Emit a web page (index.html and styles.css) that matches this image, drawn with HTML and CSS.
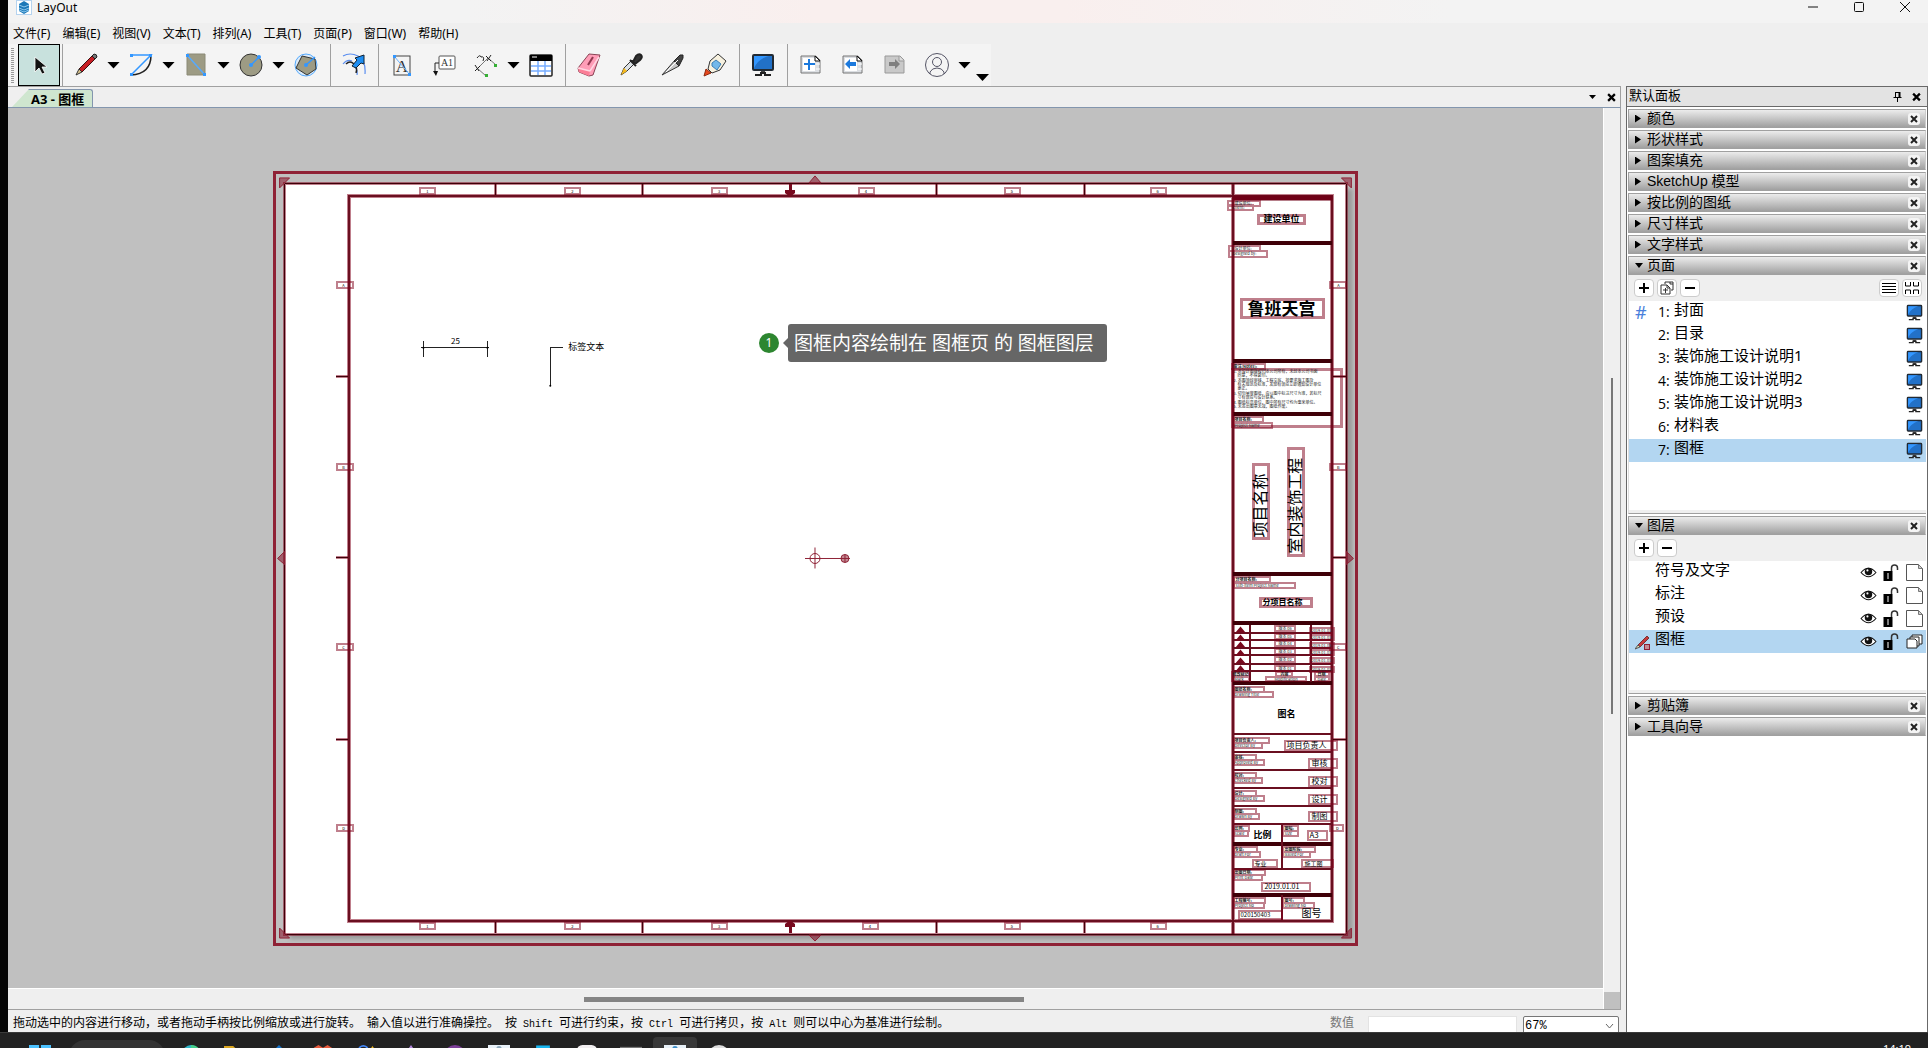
FILE: index.html
```html
<!DOCTYPE html>
<html lang="zh-CN">
<head>
    <meta charset="UTF-8">
    <meta name="viewport" content="width=device-width, initial-scale=1.0">
    <title>LayOut</title>
    <link rel="stylesheet" href="styles.css">
</head>
<body>

    <!-- shared icons -->
    <svg class="sprite" aria-hidden="true">
        <symbol id="monitor" viewBox="0 0 24 24">
            <rect x="2" y="2" width="20" height="15" rx="1" fill="#2271c8" stroke="#222a33" stroke-width="2"/>
            <path d="M3 3h15C10 5 6 9 3 15z" fill="#3397ff"/>
            <path d="M10 18h4v3h-4z" fill="#444"/>
            <path d="M4 22h7M13 22h7M9 20h6" stroke="#222" stroke-width="2"/>
        </symbol>
        <symbol id="eye" viewBox="0 0 16 12">
            <path d="M1 6Q8-2 15 6Q8 14 1 6z" fill="#fff" stroke="#111"/>
            <circle cx="8" cy="5" r="3.5" fill="#111"/>
            <circle cx="7" cy="4" r="1" fill="#fff"/>
        </symbol>
        <symbol id="unlock" viewBox="0 0 16 17">
            <path d="M8 7V4q0-3 3-3t3 3v2" fill="none" stroke="#333" stroke-width="1.5"/>
            <rect x="0" y="7" width="9" height="10" fill="#000"/>
            <path d="M4.5 9v6" stroke="#fff"/>
        </symbol>
        <symbol id="sheet" viewBox="0 0 17 17">
            <path d="M.5.5h12l4 4v12H.5z" fill="#fff" stroke="#555"/>
            <path d="M12.500 .5v4h4z" fill="#ccc" stroke="#777"/>
        </symbol>
        <symbol id="page" viewBox="0 0 22 20">
            <path d="M1 1h15l4 4v13H1z" fill="#dcdfe3" stroke="#777"/>
            <path d="M3 3h12v13H3z" fill="#fff"/>
            <path d="M15 1v5h5z" fill="#fff" stroke="#111"/>
            <path d="M16 9h4M16 14h4" stroke="#fff"/>
        </symbol>
        <symbol id="cross" viewBox="0 0 8 8">
            <path d="M1 1l6 6M7 1L1 7" stroke="currentColor" stroke-width="2"/>
        </symbol>
    </svg>

    <div class="window">
        <header class="titlebar">
            <svg class="app-icon" viewBox="0 0 16 16"><rect x=".5" y=".5" width="15" height="14" fill="#fff" stroke="#b5d3ef"/><path d="M8 1l5 3v7l-5 3-5-3V4z" fill="#1c78b8"/><path d="M3 5l5 2 5-2M3 8l5 2 5-2M3 10l5 2 5-2" fill="none" stroke="#8ec9ee"/></svg>
            <span class="app-name">LayOut</span>
            <div class="window-buttons">
                <button type="button" aria-label="最小化"><svg viewBox="0 0 12 12"><path d="M1 6h10" stroke="#111"/></svg></button>
                <button type="button" aria-label="最大化"><svg viewBox="0 0 12 12"><rect x="1.500" y="1.500" width="9" height="9" rx="1" fill="none" stroke="#111"/></svg></button>
                <button type="button" aria-label="关闭"><svg viewBox="0 0 12 12"><path d="M1 1l10 10M11 1L1 11" stroke="#111"/></svg></button>
            </div>
        </header>

        <nav class="menubar">
            <button type="button">文件(F)</button>
            <button type="button">编辑(E)</button>
            <button type="button">视图(V)</button>
            <button type="button">文本(T)</button>
            <button type="button">排列(A)</button>
            <button type="button">工具(T)</button>
            <button type="button">页面(P)</button>
            <button type="button">窗口(W)</button>
            <button type="button">帮助(H)</button>
        </nav>

        <div class="toolbar">
            <span class="grip"></span>
            <button type="button" class="tool active" aria-label="选择"><svg viewBox="0 0 24 24"><path d="M8 4v15l4-4 3 6 3-1-3-6h5z" fill="#111" stroke="#fff" stroke-width=".8"/></svg></button>
            <span class="sep"></span>
            <button type="button" class="tool" aria-label="线条"><svg viewBox="0 0 24 24"><path d="M5 16L19 2l3 3L8 19z" fill="#c81e24" stroke="#3a1010"/><path d="M18 3l2-2q3 0 3 3l-2 2z" fill="#777" stroke="#222"/><path d="M5 16l3 3-6 3z" fill="#d9c28a" stroke="#333"/></svg></button>
            <button type="button" class="caret" aria-label="线条选项"></button>
            <button type="button" class="tool" aria-label="圆弧"><svg viewBox="0 0 24 24"><path d="M22 2q0 19-20 20" fill="none" stroke="#222" stroke-width="1.500"/><path d="M2 2h20L2 22" fill="none" stroke="#3397ff" stroke-width="1.500"/><path d="M1 1h3v3H1zM20 1h3v3h-3zM1 20h3v3H1z" fill="#3397ff"/></svg></button>
            <button type="button" class="caret" aria-label="圆弧选项"></button>
            <button type="button" class="tool" aria-label="矩形"><svg viewBox="0 0 24 24"><path d="M3 1h18v21H3z" fill="#9d9b84" stroke="#8b8a76"/><path d="M3 2l18 20" stroke="#55aaff" stroke-width="1.500"/><path d="M2 1h3v3H2zM19 20h3v3h-3z" fill="#3397ff"/></svg></button>
            <button type="button" class="caret" aria-label="矩形选项"></button>
            <button type="button" class="tool" aria-label="圆"><svg viewBox="0 0 24 24"><circle cx="12" cy="12" r="11" fill="#9d9b84" stroke="#333"/><path d="M12 12l8-8" stroke="#3397ff" stroke-width="1.500"/><circle cx="12" cy="12" r="2" fill="#3397ff"/><circle cx="20" cy="4" r="2" fill="#3397ff"/></svg></button>
            <button type="button" class="caret" aria-label="圆选项"></button>
            <button type="button" class="tool" aria-label="多边形"><svg viewBox="0 0 24 24"><circle cx="12" cy="12" r="11" fill="#dcebf8" stroke="#55aaff"/><path d="M8 3l13 3 1 10-9 6L2 15z" fill="#9d9b84" stroke="#333"/><path d="M12 12l9-8" stroke="#3397ff" stroke-width="1.500"/><circle cx="12" cy="12" r="2" fill="#3397ff"/></svg></button>
            <span class="sep"></span>
            <button type="button" class="tool" aria-label="偏移"><svg viewBox="0 0 24 24"><path d="M1 3Q8-1 16 3t7 18M1 11q4-5 9-3M13 14q3 3 2 8" fill="none" stroke="#5a8ef0" stroke-width="1.200"/><path d="M4 11q4-4 8 0t2 9" fill="none" stroke="#222" stroke-width="1.500"/><path d="M10 13l5-6-2-2 9-3v9l-3-1-5 5z" fill="#1d8df2" stroke="#123"/></svg></button>
            <span class="sep"></span>
            <button type="button" class="tool" aria-label="文本"><svg viewBox="0 0 24 24"><rect x="4" y="3" width="16" height="19" fill="none" stroke="#444"/><text x="12" y="19" class="icon-serif" font-size="17">A</text><path d="M4 3l16 19" stroke="#6ab2ff"/><path d="M3 2h3v3H3zM18 20h3v3h-3z" fill="#3397ff"/></svg></button>
            <button type="button" class="tool" aria-label="标签"><svg viewBox="0 0 24 24"><rect x="7" y="3" width="16" height="13" rx="1" fill="#fff" stroke="#555"/><text x="15" y="13" class="icon-serif" font-size="10">A1</text><path d="M7 10H3v9" fill="none" stroke="#222"/><path d="M1 18h5l-2 5z" fill="#111"/></svg></button>
            <button type="button" class="tool" aria-label="尺寸"><svg viewBox="0 0 24 24"><path d="M3 16L14 5M14 5l8 7M3 15l9 8" fill="none" stroke="#777"/><path d="M1 12l4 6M1 18l5-5M12 3l5 5M17 2l-4 6M3 5q3-4 4-1 4-1 2 4" fill="none" stroke="#222"/><path d="M20 11h3v3h-3zM11 21h3v3h-3z" fill="#35b035"/></svg></button>
            <button type="button" class="caret" aria-label="尺寸选项"></button>
            <button type="button" class="tool" aria-label="表格"><svg viewBox="0 0 24 24"><rect x="1" y="2" width="22" height="21" rx="1" fill="#fff" stroke="#222" stroke-width="1.500"/><path d="M1 2h22v6H1z"/><path d="M9 8v14M16 8v14M2 13h20M2 18h20" stroke="#77adff" stroke-width="1.500"/><path d="M3 4h5" stroke="#fff"/></svg></button>
            <span class="sep"></span>
            <button type="button" class="tool" aria-label="橡皮擦"><svg viewBox="0 0 24 24"><path d="M1 15L12 1l11 1-7 20-4 1-10-4z" fill="#ff9db7" stroke="#8a4455"/><path d="M1 15l12 3-1 5-10-4z" fill="#fb7e96"/><path d="M13 18L22 4M1 15l12 3" stroke="#ffd7e2" stroke-width="1.500"/><path d="M11 12l5-8" stroke="#933850" stroke-width="2"/></svg></button>
            <button type="button" class="tool" aria-label="样式"><svg viewBox="0 0 24 24"><path d="M2 22l3-7 8-8 3 3-8 8z" fill="#dce1e5" stroke="#333"/><path d="M2 22l3-7 3 3z" fill="#f5b91b"/><path d="M11 7l6 6M14 9l3-6q3-3 5-1t-1 5l-5 4z" fill="#333" stroke="#222" stroke-width="2"/></svg></button>
            <button type="button" class="tool" aria-label="分割"><svg viewBox="0 0 24 24"><path d="M1 22l13-15 4 6z" fill="#c8c8c8" stroke="#333"/><path d="M13 8l6-6h3v3l-4 8z" fill="#444" stroke="#222"/><path d="M5 19l12-12" stroke="#fff"/></svg></button>
            <button type="button" class="tool" aria-label="合并"><svg viewBox="0 0 24 24"><path d="M5 16l2-8 8-7 8 7-6 9-8 3z" fill="#f7f1df" stroke="#333"/><path d="M9 10l4-3 5 4-4 6-5-4z" fill="#73b8ea" stroke="#3d7eb5"/><path d="M3 16l5 4-7 3z" fill="#e8481d" stroke="#8d2a10"/></svg></button>
            <span class="sep"></span>
            <button type="button" class="tool" aria-label="开始演示"><svg><use href="#monitor"/></svg></button>
            <span class="sep"></span>
            <button type="button" class="tool" aria-label="添加页面"><svg viewBox="0 0 24 24"><use href="#page" x="1" y="2" width="22" height="20"/><path d="M10 6v11M5 11h11" stroke="#1b79dd" stroke-width="2"/></svg></button>
            <button type="button" class="tool" aria-label="上一页"><svg viewBox="0 0 24 24"><use href="#page" x="1" y="2" width="22" height="20"/><path d="M4 11l5-5v3h6v4H9v3z" fill="#1b79dd"/></svg></button>
            <button type="button" class="tool" aria-label="下一页" disabled><svg viewBox="0 0 24 24"><path d="M2 3h15l4 4v13H2z" fill="#c9c9c9" stroke="#999"/><path d="M16 3v5h5" fill="#ddd" stroke="#999"/><path d="M17 11l-5-5v3H6v4h6v3z" fill="#808080"/></svg></button>
            <button type="button" class="tool" aria-label="用户"><svg viewBox="0 0 24 24"><g fill="none" stroke="#555566"><circle cx="12" cy="12" r="11.500"/><circle cx="12" cy="9" r="4.500"/><path d="M5 21v-2q2-4 7-4t7 4v2"/></g></svg></button>
            <button type="button" class="caret" aria-label="用户选项"></button>
            <button type="button" class="caret overflow" aria-label="更多工具"></button>
        </div>

        <main class="main">
            <section class="document">
                <div class="tabs">
                    <button type="button" class="tab">A3 - 图框</button>
                    <button type="button" class="tab-menu" aria-label="文档列表"></button>
                    <button type="button" class="tab-close" aria-label="关闭文档"><svg><use href="#cross"/></svg></button>
                </div>

                <div class="viewport">
                    <div class="canvas">
                        <svg class="drawing" viewBox="8 108 1595 881">
                            <!-- paper and its shadow -->
                            <rect x="289" y="189" width="1064" height="751" fill="#999" class="shadow"/>
                            <rect x="284" y="184" width="1063" height="751" fill="#fff"/>
                            <rect x="274" y="173" width="1083" height="772" class="group"/>

                            <!-- sheet border and ticks -->
                            <g class="halo">
                                <path d="M284 184h1063v751H284z"/>
                                <path d="M495 184v12M642 184v12M790 184v12M937 184v12M1085 184v12M495 922v12M642 922v12M790 922v12M937 922v12M1085 922v12"/>
                                <path d="M335 377h13M335 558h13M335 740h13M1334 377h13M1334 558h13M1334 740h13"/>
                            </g>
                            <path class="halo wide" d="M348 196h985v726H348zM1233 184v751"/>
                            <path class="core" d="M284 184h1063v751H284zM495 184v12M642 184v12M790 184v12M937 184v12M1085 184v12M495 922v12M642 922v12M790 922v12M937 922v12M1085 922v12M335 377h13M335 558h13M335 740h13M1334 377h13M1334 558h13M1334 740h13"/>
                            <path class="frame" d="M348 196h985v726H348zM1233 184v751"/>
                            <path class="grip-mark" d="M279 178h10l-10 10zM1342 178h10v10zM1352 929v10h-10zM279 929v10h10zM809 183l6-7 6 7zM809 936l6 6 6-6zM284 552v13l-7-6zM1347 552v13l7-6z"/>
                            <path fill="#78091e" d="M789 184h3v6h3v3l-5 4-5-4v-3h4zM789 934h3v-6h3v-3l-5-4-5 4v3h4z"/>

                            <!-- zone labels -->
                            <path class="halo thin" d="M420 188h15v6h-15zM565 188h15v6h-15zM712 188h15v6h-15zM859 188h15v6h-15zM1005 188h15v6h-15zM1151 188h15v6h-15zM420 924h15v6h-15zM565 924h15v6h-15zM712 924h15v6h-15zM863 924h15v6h-15zM1005 924h15v6h-15zM1151 924h15v6h-15z"/>
                            <path class="halo thin" d="M336 282h16v6h-16zM336 464h16v6h-16zM336 645h16v6h-16zM336 826h16v6h-16zM1331 282h16v6h-16zM1331 464h16v6h-16zM1331 645h16v6h-16zM1331 826h13v6h-13z"/>
                            <g class="zone">
                                <text x="427" y="193">1</text><text x="572" y="193">2</text><text x="719" y="193">3</text><text x="866" y="193">4</text><text x="1012" y="193">5</text><text x="1158" y="193">6</text>
                                <text x="427" y="929">1</text><text x="572" y="929">2</text><text x="719" y="929">3</text><text x="870" y="929">4</text><text x="1012" y="929">5</text><text x="1158" y="929">6</text>
                                <text x="343" y="287">A</text><text x="343" y="469">B</text><text x="343" y="650">C</text><text x="343" y="831">D</text>
                                <text x="1339" y="287">A</text><text x="1339" y="469">B</text><text x="1339" y="650">C</text><text x="1338" y="831">D</text>
                            </g>

                            <!-- dimension and label samples -->
                            <path class="ink" d="M421 348h68M423 341v16M487 341v16M563 348h-13v38"/>
                            <circle cx="423" cy="348" r="1"/><circle cx="487" cy="348" r="1"/><circle cx="550" cy="386" r="1"/>
                            <text x="455" y="344" class="t8 mid">25</text>
                            <text x="568" y="350" class="t9">标签文本</text>

                            <!-- centre grip -->
                            <g fill="none" stroke="#8f2236">
                                <path d="M805 559h38M815 548v21"/>
                                <circle cx="815" cy="559" r="5"/>
                                <circle cx="845" cy="559" r="4" fill="#c48a94"/>
                                <path d="M841 559h9M845 555v8"/>
                            </g>

                            <!-- title block rules -->
                            <path d="M1233 198h100" stroke="#6f0017" stroke-width="5"/>
                            <path class="heavy" d="M1233 243h100M1233 361h100M1233 414h100M1233 575h100M1233 624h100M1233 684h100M1233 845h100M1233 896h100"/>
                            <path class="rule" d="M1233 735h100M1233 753h100M1233 771h100M1233 789h100M1233 807h100M1233 825h100M1233 870h100M1283 825v45M1283 896v26"/>
                            <path class="rule" d="M1233 634h100M1233 641h100M1233 649h100M1233 656h100M1233 665h100M1233 672h100M1251 626v57M1312 626v57"/>

                            <!-- text selection boxes -->
                            <path class="halo" d="M1259 216h46v8h-46zM1242 300h82v18h-82zM1233 370h109v57h-109zM1254 465h15v74h-15zM1289 449h15v107h-15zM1261 599h51v8h-51z"/>
                            <path class="halo thin" d="M1228 201h33v5h-33zM1228 205h26v5h-26zM1229 246h32v5h-32zM1229 251h39v6h-39zM1232 364h34v5h-34zM1234 417h30v5h-30zM1234 423h39v5h-39z"/>
                            <path class="halo thin" d="M1234 578h37v5h-37zM1234 584h62v5h-62z"/>
                            <path class="halo thin" d="M1276 627h20v5h-20zM1276 635h20v5h-20zM1276 642h20v5h-20zM1276 650h20v5h-20zM1276 658h20v5h-20zM1276 667h20v5h-20zM1311 629h24v5h-24zM1311 636h24v5h-24zM1311 644h24v5h-24zM1311 651h24v5h-24zM1311 659h24v5h-24zM1311 668h24v5h-24z"/>
                            <path class="halo thin" d="M1232 673h18v4h-18zM1232 678h18v4h-18zM1277 673h16v4h-16zM1267 678h40v4h-40zM1316 673h14v4h-14zM1316 678h14v4h-14zM1234 688h31v5h-31zM1234 693h40v5h-40z"/>
                            <path class="halo thin" d="M1234 739h36v5h-36zM1234 744h29v5h-29zM1286 742h52v9h-52zM1234 756h23v5h-23zM1234 761h31v5h-31zM1310 760h28v9h-28zM1234 774h23v5h-23zM1234 779h29v5h-29zM1310 778h28v9h-28zM1234 792h23v5h-23zM1234 797h31v5h-31zM1310 796h28v9h-28zM1234 810h23v5h-23zM1234 815h26v5h-26zM1310 813h28v9h-28z"/>
                            <path class="halo thin" d="M1234 827h16v5h-16zM1234 832h15v5h-15zM1284 827h15v5h-15zM1284 832h15v5h-15zM1309 832h19v9h-19zM1234 848h24v5h-24zM1234 853h27v5h-27zM1284 848h32v5h-32zM1284 853h27v5h-27zM1254 861h24v7h-24zM1303 861h31v7h-31zM1234 871h32v5h-32zM1234 876h29v5h-29zM1263 884h48v8h-48z"/>
                            <path class="halo thin" d="M1234 899h32v5h-32zM1234 904h31v5h-31zM1284 899h21v5h-21zM1284 904h31v5h-31zM1239 912h44v8h-44z"/>

                            <!-- revision triangles -->
                            <path fill="#78091e" d="M1241 627l5 6h-10zM1241 635l5 6h-10zM1241 642l5 6h-10zM1241 650l5 6h-10zM1241 658l5 6h-10zM1241 666l5 6h-10z"/>

                            <!-- title block captions -->
                            <g class="cap">
                                <text x="1235" y="205">建设单位:</text><text x="1233" y="209">Client:</text>
                                <text x="1235" y="250">设计单位:</text><text x="1233" y="255">Designed by:</text>
                                <text x="1234" y="368" class="b">备注(Notes):</text>
                                <text x="1235" y="421" class="b">项目名称:</text><text x="1235" y="427">Project Name</text>
                                <text x="1236" y="582" class="b">分项目名称:</text><text x="1236" y="588">Sub-item Project Name</text>
                                <text x="1279" y="631">版本 06</text><text x="1279" y="639">版本 05</text><text x="1279" y="646">版本 04</text><text x="1279" y="654">版本 03</text><text x="1279" y="662">版本 02</text><text x="1279" y="671">版本 01</text>
                                <text x="1312" y="633">2019.01.01</text><text x="1312" y="640">2019.01.01</text><text x="1312" y="648">2019.01.01</text><text x="1312" y="655">2019.01.01</text><text x="1312" y="663">2019.01.01</text><text x="1312" y="672">2019.01.01</text>
                                <text x="1233" y="677" class="b">修改标记</text><text x="1235" y="682">Mark</text><text x="1281" y="677" class="b">内容</text><text x="1275" y="682">Modification</text><text x="1318" y="677" class="b">日期</text><text x="1318" y="682">Date</text>
                                <text x="1235" y="692" class="b">图纸名称:</text><text x="1235" y="697">Drawing Title</text>
                                <text x="1235" y="743" class="b">项目负责人:</text><text x="1235" y="748">Director By</text>
                                <text x="1235" y="760" class="b">审核:</text><text x="1235" y="765">Approved By</text>
                                <text x="1235" y="778" class="b">校对:</text><text x="1235" y="783">Checked By</text>
                                <text x="1235" y="796" class="b">设计:</text><text x="1235" y="801">Designed By</text>
                                <text x="1235" y="814" class="b">制图:</text><text x="1235" y="819">Drawn By</text>
                                <text x="1235" y="831" class="b">比例:</text><text x="1235" y="836">Scale</text><text x="1285" y="831" class="b">图幅:</text><text x="1285" y="836">Size</text>
                                <text x="1235" y="852" class="b">专业:</text><text x="1235" y="857">Draft For</text><text x="1285" y="852" class="b">出图阶段:</text><text x="1285" y="857">Issued For</text>
                                <text x="1235" y="875" class="b">出图日期:</text><text x="1235" y="880">Print Date</text>
                                <text x="1235" y="903" class="b">工程编号:</text><text x="1235" y="908">Project No</text><text x="1285" y="903" class="b">图号:</text><text x="1285" y="908">Drawing No</text>
                            </g>
                            <g class="notes">
                                <text x="1234" y="373">1. 本设计图版权归本公司所有，未经本公司书面</text>
                                <text x="1238" y="377">同意，不得复印。</text>
                                <text x="1234" y="382">2. 本图须经审核、工程交底，按要求施工图及</text>
                                <text x="1238" y="386">有关规范及标准，发现有误应立即通知设计单位</text>
                                <text x="1238" y="390">更正。</text>
                                <text x="1234" y="395">3. 切勿量度图纸，应以图中标注尺寸为准，若标尺</text>
                                <text x="1238" y="399">寸有误应与设计联系。</text>
                                <text x="1234" y="404">4. 图纸标高单位，图中所有尺寸均为毫米单位。</text>
                                <text x="1234" y="408">5. 未签出图章无效，图纸作废。</text>
                            </g>

                            <!-- title block values -->
                            <text x="1264" y="222" class="t9 b">建设单位</text>
                            <text x="1248" y="315" class="t17 b">鲁班天宫</text>
                            <text transform="translate(1267 538) rotate(-90)" class="t16">项目名称</text>
                            <text transform="translate(1302 554) rotate(-90)" class="t16">室内装饰工程</text>
                            <text x="1263" y="606" class="t8 b">分项目名称</text>
                            <text x="1278" y="718" class="t9 b">图名</text>
                            <text x="1287" y="749" class="t8">项目负责人</text>
                            <text x="1312" y="767" class="t8">审核</text>
                            <text x="1312" y="785" class="t8">校对</text>
                            <text x="1312" y="803" class="t8">设计</text>
                            <text x="1312" y="820" class="t8">制图</text>
                            <text x="1254" y="839" class="t9 b">比例</text>
                            <text x="1310" y="839" class="t8">A3</text>
                            <text x="1255" y="867" class="t6">专业</text>
                            <text x="1305" y="867" class="t6">施工图</text>
                            <text x="1265" y="890" class="t7">2019.01.01</text>
                            <text x="1241" y="918" class="t6">020150403</text>
                            <text x="1302" y="918" class="t10">图号</text>
                        </svg>
                        <div class="callout">
                            <span class="callout-badge">1</span>
                            <p class="callout-text">图框内容绘制在 图框页 的 图框图层</p>
                        </div>
                    </div>
                    <div class="scroll-x"><span class="thumb"></span></div>
                    <div class="scroll-y"><div class="track"><span class="thumb"></span></div><span class="corner"></span></div>
                </div>

                <footer class="statusbar">
                    <p class="hint">拖动选中的内容进行移动，或者拖动手柄按比例缩放或进行旋转。<kbd> </kbd>输入值以进行准确操控。<kbd> </kbd>按<kbd> Shift </kbd>可进行约束，按<kbd> Ctrl </kbd>可进行拷贝，按<kbd> Alt </kbd>则可以中心为基准进行绘制。</p>
                    <label for="measure">数值</label>
                    <input type="text" id="measure" name="measure">
                    <select id="zoom" name="zoom" aria-label="缩放">
                        <option>67%</option>
                        <option>100%</option>
                    </select>
                </footer>
            </section>

            <aside class="tray">
                <div class="tray-title">
                    <h2>默认面板</h2>
                    <button type="button" aria-label="固定"><svg viewBox="0 0 8 10"><path d="M2 0v5M2 .5h4M0 5.500h8M4 6v4" stroke="#000" fill="none"/><path d="M5 0h2v5H5z"/></svg></button>
                    <button type="button" aria-label="关闭面板"><svg viewBox="0 0 8 8"><use href="#cross"/></svg></button>
                </div>

                <div class="panel-head"><h3>颜色</h3><button type="button" aria-label="关闭"><svg><use href="#cross"/></svg></button></div>
                <div class="panel-head"><h3>形状样式</h3><button type="button" aria-label="关闭"><svg><use href="#cross"/></svg></button></div>
                <div class="panel-head"><h3>图案填充</h3><button type="button" aria-label="关闭"><svg><use href="#cross"/></svg></button></div>
                <div class="panel-head"><h3>SketchUp 模型</h3><button type="button" aria-label="关闭"><svg><use href="#cross"/></svg></button></div>
                <div class="panel-head"><h3>按比例的图纸</h3><button type="button" aria-label="关闭"><svg><use href="#cross"/></svg></button></div>
                <div class="panel-head"><h3>尺寸样式</h3><button type="button" aria-label="关闭"><svg><use href="#cross"/></svg></button></div>
                <div class="panel-head"><h3>文字样式</h3><button type="button" aria-label="关闭"><svg><use href="#cross"/></svg></button></div>

                <div class="panel-head open"><h3>页面</h3><button type="button" aria-label="关闭"><svg><use href="#cross"/></svg></button></div>
                <div class="panel-body">
                    <div class="panel-tools">
                        <button type="button" aria-label="添加页面"><svg viewBox="0 0 14 14"><path d="M7 2v10M2 7h10" stroke="#000" stroke-width="2"/></svg></button>
                        <button type="button" aria-label="复制页面"><svg viewBox="0 0 14 14"><path d="M5 3V1h8v8h-2M1 4h6l3 3v6H1zM3 9h5M5.500 7v5M7 4v3h3M10 1v2h3" fill="none" stroke="#333"/></svg></button>
                        <button type="button" aria-label="删除页面"><svg viewBox="0 0 14 14"><path d="M2 7h10" stroke="#000" stroke-width="2"/></svg></button>
                        <span class="spacer"></span>
                        <button type="button" aria-label="列表视图"><svg viewBox="0 0 14 14"><path d="M0 2.500h14M0 5.500h14M0 8.500h14M0 11.500h14" stroke="#000"/></svg></button>
                        <button type="button" aria-label="缩略图视图"><svg viewBox="0 0 14 14"><path d="M.5 1v4h5V1M8.500 1v4h5V1M.5 13V9h5v4M8.500 13V9h5v4" fill="none" stroke="#000"/></svg></button>
                    </div>
                    <ul class="list pages">
                        <li><span class="mark">#</span><span class="num">1:</span><span class="name">封面</span><svg class="ico"><use href="#monitor"/></svg></li>
                        <li><span class="mark"></span><span class="num">2:</span><span class="name">目录</span><svg class="ico"><use href="#monitor"/></svg></li>
                        <li><span class="mark"></span><span class="num">3:</span><span class="name">装饰施工设计说明1</span><svg class="ico"><use href="#monitor"/></svg></li>
                        <li><span class="mark"></span><span class="num">4:</span><span class="name">装饰施工设计说明2</span><svg class="ico"><use href="#monitor"/></svg></li>
                        <li><span class="mark"></span><span class="num">5:</span><span class="name">装饰施工设计说明3</span><svg class="ico"><use href="#monitor"/></svg></li>
                        <li><span class="mark"></span><span class="num">6:</span><span class="name">材料表</span><svg class="ico"><use href="#monitor"/></svg></li>
                        <li class="selected"><span class="mark"></span><span class="num">7:</span><span class="name">图框</span><svg class="ico"><use href="#monitor"/></svg></li>
                    </ul>
                </div>

                <div class="panel-head open"><h3>图层</h3><button type="button" aria-label="关闭"><svg><use href="#cross"/></svg></button></div>
                <div class="panel-body">
                    <div class="panel-tools">
                        <button type="button" aria-label="添加图层"><svg viewBox="0 0 14 14"><path d="M7 2v10M2 7h10" stroke="#000" stroke-width="2"/></svg></button>
                        <button type="button" aria-label="删除图层"><svg viewBox="0 0 14 14"><path d="M2 7h10" stroke="#000" stroke-width="2"/></svg></button>
                    </div>
                    <ul class="list layers">
                        <li><span class="mark"></span><span class="name">符号及文字</span><svg class="ico"><use href="#eye"/></svg><svg class="ico"><use href="#unlock"/></svg><svg class="ico"><use href="#sheet"/></svg></li>
                        <li><span class="mark"></span><span class="name">标注</span><svg class="ico"><use href="#eye"/></svg><svg class="ico"><use href="#unlock"/></svg><svg class="ico"><use href="#sheet"/></svg></li>
                        <li><span class="mark"></span><span class="name">预设</span><svg class="ico"><use href="#eye"/></svg><svg class="ico"><use href="#unlock"/></svg><svg class="ico"><use href="#sheet"/></svg></li>
                        <li class="selected"><span class="mark"><svg viewBox="0 0 16 16"><path d="M3 11L12 2l2 2-9 9z" fill="#c8383c" stroke="#733"/><path d="M3 11l2 2-5 2z" fill="#eadcb0" stroke="#555"/><rect x="9.500" y="10.500" width="5" height="5" fill="#c48a94" stroke="#8f1f35"/></svg></span><span class="name">图框</span><svg class="ico"><use href="#eye"/></svg><svg class="ico"><use href="#unlock"/></svg><svg class="ico" viewBox="0 0 17 17"><path d="M6 2h10v9H6z" fill="#fff" stroke="#222"/><path d="M4 4h9v9H4z" fill="#fff" stroke="#222"/><path d="M1 6h8l2 2v7H1z" fill="#fff" stroke="#222"/></svg></li>
                    </ul>
                </div>

                <div class="panel-head"><h3>剪贴簿</h3><button type="button" aria-label="关闭"><svg><use href="#cross"/></svg></button></div>
                <div class="panel-head"><h3>工具向导</h3><button type="button" aria-label="关闭"><svg><use href="#cross"/></svg></button></div>
            </aside>
        </main>
    </div>

    <div class="taskbar">
        <button type="button" class="task" aria-label="开始"><svg viewBox="0 0 24 24"><path d="M0 0h11v11H0zM13 0h11v11H13zM0 13h11v11H0zM13 13h11v11H13z" fill="#4cc2ff"/></svg></button>
        <span class="search"></span>
        <button type="button" class="task" aria-label="浏览器"><svg viewBox="0 0 24 24"><path d="M2 6Q12-6 22 6v18H2z" fill="#2fb6c8"/><path d="M12 0q7 0 10 6v8H12z" fill="#45cf8a"/></svg></button>
        <button type="button" class="task" aria-label="文件夹"><svg viewBox="0 0 24 24"><path d="M0 1h10l3 3h11v18H0z" fill="#d9a520"/></svg></button>
        <button type="button" class="task" aria-label="编辑器"><svg viewBox="0 0 24 24"><path d="M12 0l12 12-12 12L0 12z" fill="#1673c8"/></svg></button>
        <button type="button" class="task" aria-label="火狐"><svg viewBox="0 0 24 24"><path d="M2 3l5-3 5 3 5-3 6 4-3 20H4z" fill="#e65a3c"/></svg></button>
        <button type="button" class="task" aria-label="绘图"><svg viewBox="0 0 24 24"><circle cx="8" cy="6" r="5" fill="none" stroke="#4285f4" stroke-width="2"/><path d="M18 1l4 6h-8z" fill="#f0b71c"/></svg></button>
        <button type="button" class="task" aria-label="影音"><svg viewBox="0 0 24 24"><path d="M12 0l7 10H5z" fill="#b58ae0"/></svg></button>
        <button type="button" class="task" aria-label="录屏"><svg viewBox="0 0 24 24"><circle cx="12" cy="12" r="12" fill="#7d3f98"/></svg></button>
        <button type="button" class="task" aria-label="文档"><svg viewBox="0 0 24 24"><path d="M0 0h24v24H0z" fill="#e8f1f8"/><circle cx="12" cy="4" r="3" fill="#8aa5b8"/></svg></button>
        <button type="button" class="task" aria-label="手机"><svg viewBox="0 0 24 24"><rect x="6" y="2" width="12" height="20" fill="none" stroke="#18b6f0" stroke-width="3"/></svg></button>
        <button type="button" class="task" aria-label="聊天"><svg viewBox="0 0 24 24"><rect x="1" y="0" width="22" height="24" rx="6" fill="#f1eef0"/></svg></button>
        <button type="button" class="task" aria-label="终端"><svg viewBox="0 0 24 24"><path d="M0 2h24v22H0z" fill="#777"/></svg></button>
        <button type="button" class="task current" aria-label="LayOut"><svg viewBox="0 0 24 24"><path d="M0 0h24v24H0z" fill="#e8f1f8"/><circle cx="12" cy="4" r="3" fill="#3f8ec8"/></svg></button>
        <button type="button" class="task" aria-label="工具"><svg viewBox="0 0 24 24"><circle cx="12" cy="12" r="12" fill="#ddd"/></svg></button>
        <time class="clock">14:19</time>
    </div>

</body>
</html>
```

FILE: styles.css
```css
* {
    box-sizing: border-box;
}

body {
    margin: 0;
    height: 100vh;
    display: flex;
    flex-direction: column;
    overflow: hidden;
    background: #050505;
    font-family: "Noto Sans", "Noto Sans CJK SC", sans-serif;
    font-size: 12px;
    color: #000;
}

button {
    margin: 0;
    padding: 0;
    border: none;
    background: none;
    font: inherit;
    color: inherit;
}

h2, h3, p, ul {
    margin: 0;
    padding: 0;
    font-weight: normal;
    list-style: none;
}

.sprite {
    display: none;
}

.window {
    flex: 1;
    min-height: 0;
    margin-left: 8px;
    display: flex;
    flex-direction: column;
    background: #efefef;
}

/* title bar */
.titlebar {
    height: 23px;
    display: flex;
    padding-left: 8px;
    background: linear-gradient(90deg, #f3f3f3 24%, #f9efee 42%, #f9efee 55%, #f3f3f3 75%);
}

.app-icon {
    width: 16px;
    height: 16px;
}

.app-name {
    flex: 1;
    margin-left: 5px;
    line-height: 16px;
}

.window-buttons {
    display: flex;
}

.window-buttons button {
    width: 46px;
    height: 15px;
}

.window-buttons svg {
    width: 12px;
    height: 12px;
}

/* menu */
.menubar {
    height: 21px;
    display: flex;
    gap: 12px;
    padding-left: 5px;
    line-height: 19px;
}

/* toolbar */
.toolbar {
    height: 42px;
    display: flex;
    align-self: flex-start;
    align-items: center;
    padding: 0 2px 0 3px;
    background: #f4f4f4;
}

.grip {
    width: 3px;
    height: 35px;
    margin-right: 4px;
    background: repeating-linear-gradient(#999 0 1px, #f4f4f4 1px 2px);
}

.tool {
    width: 42px;
    height: 42px;
    display: flex;
    align-items: center;
    justify-content: center;
}

.tool svg {
    width: 24px;
    height: 24px;
}

.tool.active {
    border: 1px solid #000;
    background: #c8e1dd;
}

.icon-serif {
    font-family: "Liberation Serif", serif;
    fill: #333;
    text-anchor: middle;
}

.sep {
    width: 1px;
    height: 42px;
    margin: 0 2px;
    background: #a0a0a0;
}

.sep ~ .sep {
    margin-left: 3px;
}

.caret {
    width: 13px;
    height: 7px;
    background: #000;
    clip-path: polygon(0 0, 100% 0, 50% 100%);
}

.caret.overflow {
    align-self: flex-end;
    margin: 0 0 5px 5px;
}

/* document area */
.main {
    flex: 1;
    min-height: 0;
    display: grid;
    grid-template-columns: minmax(0, 1fr) 302px;
    gap: 5px;
}

.document {
    min-height: 0;
    display: flex;
    flex-direction: column;
}

.tabs {
    height: 22px;
    display: flex;
    align-items: center;
    padding: 0 4px;
    border-top: 1px solid #a0a0a0;
    border-right: 1px solid #a0a0a0;
    border-bottom: 1px solid #8396ae;
}

.tab {
    align-self: flex-end;
    height: 18px;
    padding: 0 8px 0 19px;
    border-top: 1px solid #8396ae;
    border-right: 1px solid #8396ae;
    border-radius: 0 3px 0 0;
    background: #cfe6cf;
    clip-path: polygon(17px 0, 100% 0, 100% 100%, 0 100%);
    font-size: 13px;
    font-weight: bold;
    line-height: 16px;
}

.tab-menu {
    width: 7px;
    height: 4px;
    margin: 0 11px 0 auto;
    background: #000;
    clip-path: polygon(0 0, 100% 0, 50% 100%);
}

.tab-close, .tab-close svg {
    display: block;
    width: 9px;
    height: 9px;
}

.viewport {
    flex: 1;
    min-height: 0;
    display: grid;
    grid-template: minmax(0, 1fr) 21px / minmax(0, 1fr) 18px;
    border-bottom: 1px solid #a0a0a0;
}

.canvas {
    position: relative;
    background: #c0c0c0;
    overflow: hidden;
}

.drawing {
    display: block;
    width: 100%;
    height: 100%;
    font-family: "Noto Sans CJK SC", sans-serif;
}

.scroll-x {
    grid-row: 2;
    display: grid;
    grid-template-columns: 576fr 440fr 579fr;
    align-items: center;
    border-top: 1px solid #fff;
}

.scroll-x .thumb {
    grid-column: 2;
    height: 5px;
    background: #858585;
}

.scroll-y {
    grid-area: 1 / 2 / 3 / 3;
    display: flex;
    flex-direction: column;
    border-left: 1px solid #fff;
    border-right: 1px solid #a0a0a0;
}

.track {
    flex: 1;
    display: grid;
    grid-template-rows: 270fr 336fr 278fr;
    justify-items: center;
}

.track .thumb {
    grid-row: 2;
    width: 2px;
    background: #777;
}

.corner {
    height: 17px;
    background: #c0c0c0;
}

/* drawing strokes */
.halo {
    fill: none;
    stroke: #80001a;
    stroke-opacity: 0.5;
    stroke-width: 3;
    shape-rendering: crispEdges;
}

.halo.wide {
    stroke-width: 4;
}

.halo.thin {
    stroke-width: 2;
}

.core {
    fill: none;
    stroke: #3f0008;
    shape-rendering: crispEdges;
}

.frame, .rule {
    fill: none;
    stroke: #6a0f20;
    stroke-width: 2;
    shape-rendering: crispEdges;
}

.heavy {
    stroke: #3f0008;
    stroke-width: 4;
    shape-rendering: crispEdges;
}

.group {
    fill: none;
    stroke: #8f2236;
    stroke-width: 3;
    shape-rendering: crispEdges;
}

.grip-mark {
    fill: #80001a;
    fill-opacity: 0.5;
    stroke: #8f2236;
}

.ink {
    fill: none;
    stroke: #222;
    shape-rendering: crispEdges;
}

.shadow {
    filter: blur(2px);
}

.zone {
    font-size: 4px;
    text-anchor: middle;
}

.cap, .notes {
    font-size: 4px;
    fill: #222;
}

.b { font-weight: bold; }
.mid { text-anchor: middle; }
.t6 { font-size: 6px; }
.t7 { font-size: 7px; }
.t8 { font-size: 8px; }
.t9 { font-size: 9px; }
.t10 { font-size: 10px; }
.t16 { font-size: 16px; }
.t17 { font-size: 17px; }

/* numbered note over the sheet */
.callout {
    position: absolute;
    top: 216px;
    left: 751px;
    display: flex;
    align-items: center;
}

.callout-badge {
    width: 20px;
    height: 20px;
    margin-right: 4px;
    border-radius: 50%;
    background: #2d8630;
    color: #fff;
    line-height: 20px;
    text-align: center;
}

.callout::before {
    content: "";
    order: 1;
    border: 5px solid transparent;
    border-left-width: 0;
    border-right-color: #666;
}

.callout-text {
    order: 2;
    padding: 0 13px 0 6px;
    border-radius: 3px;
    background: #666;
    color: #fff;
    font-size: 19px;
    line-height: 38px;
    white-space: nowrap;
}

/* status bar */
.statusbar {
    height: 22px;
    display: flex;
    gap: 6px;
    padding: 6px 2px 0 5px;
    overflow: hidden;
    font-family: "Liberation Mono", "Noto Sans CJK SC", monospace;
}

.hint {
    flex: 1;
    line-height: 17px;
    white-space: nowrap;
}

.hint kbd {
    font-family: "Liberation Mono", monospace;
    font-size: 10px;
    white-space: pre;
}

.statusbar label {
    margin-right: 8px;
    color: #777;
    line-height: 17px;
}

.statusbar input, .statusbar select {
    width: 149px;
    height: 20px;
    border: 1px solid #e3e3e3;
    background: #fff;
    font: inherit;
}

.statusbar select {
    width: 96px;
    padding: 0 1px;
    border-color: #777;
    border-radius: 2px;
    appearance: none;
    background: #fff url("data:image/svg+xml,%3Csvg xmlns='http://www.w3.org/2000/svg' width='9' height='6'%3E%3Cpath d='M1 1l3.500 4L8 1' fill='none' stroke='%23666'/%3E%3C/svg%3E") no-repeat right 4px center;
}

/* tray */
.tray {
    min-height: 0;
    overflow: hidden;
    padding-right: 1px;
    border: 1px solid #696969;
    border-bottom: none;
    background: #fff;
}

.tray-title {
    height: 20px;
    display: flex;
    align-items: center;
    gap: 10px;
    margin: 0 -1px 2px 0;
    padding: 0 6px 0 2px;
    border-bottom: 1px solid #696969;
    background: #e3e3e3;
}

.tray-title h2 {
    flex: 1;
    padding-bottom: 3px;
    font-size: 13px;
    line-height: 16px;
}

.tray-title svg {
    display: block;
    width: 9px;
    height: 10px;
}

.panel-head {
    height: 19px;
    display: flex;
    align-items: center;
    margin: 0 0 2px 1px;
    padding: 0 5px 0 6px;
    border: 1px solid #a0a0a0;
    border-right-color: #ccc;
    background: linear-gradient(#ececec, #a0a0a0);
}

.panel-head::before {
    content: "";
    width: 6px;
    height: 8px;
    margin-right: 6px;
    background: #000;
    clip-path: polygon(0 0, 100% 50%, 0 100%);
}

.panel-head.open {
    margin-bottom: 0;
}

.panel-head.open::before {
    width: 8px;
    height: 5px;
    margin-right: 4px;
    clip-path: polygon(0 0, 100% 0, 50% 100%);
}

.panel-head h3 {
    flex: 1;
    font-family: "Liberation Sans", "Noto Sans CJK SC", sans-serif;
    font-size: 14px;
    line-height: 17px;
}

.panel-head button {
    width: 12px;
    height: 12px;
    padding: 2px;
    border-radius: 3px;
    background: #f4f4f4;
    color: #222;
}

.panel-head svg {
    display: block;
    width: 8px;
    height: 8px;
}

.panel-body {
    margin: 0 0 2px 1px;
    padding-bottom: 3px;
    border-bottom: 1px solid #a0a0a0;
    border-left: 1px solid #ddd;
    background: #efefef;
}

.panel-tools {
    height: 26px;
    display: flex;
    align-items: center;
    gap: 3px;
    padding: 0 4px 0 5px;
}

.panel-tools button {
    width: 20px;
    height: 18px;
    display: flex;
    align-items: center;
    justify-content: center;
    border: 1px solid #ccc;
    border-radius: 4px;
    background: #fff;
}

.panel-tools svg {
    width: 14px;
    height: 14px;
}

.spacer {
    flex: 1;
}

.list {
    min-height: 209px;
    background: #fff;
}

.list.layers {
    min-height: 129px;
}

.list li {
    height: 23px;
    display: flex;
    align-items: center;
    padding: 0 3px 0 4px;
}

.list li.selected {
    background: #b3d6f1;
}

.mark {
    width: 22px;
    color: #4a7fdb;
    font-size: 18px;
    line-height: 23px;
    padding-left: 2px;
}

.mark svg {
    display: block;
    width: 16px;
    height: 16px;
}

.num {
    width: 19px;
    font-family: "Open Sans", sans-serif;
    font-size: 14px;
    line-height: 19px;
    padding: 0 0 2px 3px;
}

.name {
    flex: 1;
    font-size: 15px;
    line-height: 16px;
    padding-bottom: 7px;
}

.ico {
    width: 17px;
    height: 17px;
}

.layers .ico {
    margin-left: 6px;
}

/* taskbar */
.taskbar {
    height: 16px;
    display: flex;
    overflow: hidden;
    padding: 0 17px 0 18px;
    border-top: 1px solid #3a3a3a;
    background: #222;
}

.task {
    width: 44px;
    height: 48px;
    display: flex;
    flex-shrink: 0;
    align-items: flex-start;
    justify-content: center;
    padding-top: 12px;
}

.task svg {
    width: 22px;
    height: 22px;
}

.task.current {
    margin-top: 4px;
    padding-top: 8px;
    border-radius: 4px;
    background: #383838;
}

.search {
    width: 96px;
    height: 32px;
    flex-shrink: 0;
    margin: 7px 4px 0 7px;
    border-radius: 16px;
    background: #333;
}

.clock {
    margin: 8px 0 0 auto;
    color: #fff;
    font-size: 11px;
    line-height: 16px;
}
```
